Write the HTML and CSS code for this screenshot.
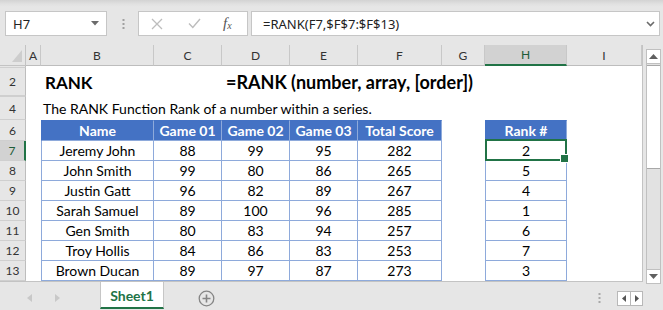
FILE: index.html
```html
<!DOCTYPE html>
<html>
<head>
<meta charset="utf-8">
<link rel="stylesheet" href="styles.css">
</head>
<body>
<div class="topbar">
  <div class="namebox"><span>H7</span><svg class="nb-arrow" width="8" height="5" viewBox="0 0 8 5"><polygon points="0,0 8,0 4,4.5" fill="#6b6b6b"/></svg></div>
  <svg class="vdots" width="3" height="11" viewBox="0 0 3 11"><rect x="0.5" y="0" width="2" height="2" fill="#a0a0a0"/><rect x="0.5" y="4" width="2" height="2" fill="#a0a0a0"/><rect x="0.5" y="8" width="2" height="2" fill="#a0a0a0"/></svg>
  <div class="fxbox">
    <svg class="ic-x" width="12" height="12" viewBox="0 0 12 12"><path d="M1 1 L11 11 M11 1 L1 11" stroke="#bdbdbd" stroke-width="1.3" fill="none"/></svg>
    <svg class="ic-check" width="13" height="11" viewBox="0 0 13 11"><path d="M1 5.5 L4.8 9.5 L12 1" stroke="#bdbdbd" stroke-width="1.4" fill="none"/></svg>
    <span class="fx">f<sub>x</sub></span>
  </div>
  <div class="formula"><span>=RANK(F7,$F$7:$F$13)</span><svg width="9" height="6" viewBox="0 0 9 6"><path d="M1 1 L4.5 4.5 L8 1" stroke="#6b6b6b" stroke-width="1.6" fill="none"/></svg></div>
</div>
<div class="main">
  <div class="leftpane">
    <div class="sheet">
      <div class="corner"><svg width="10" height="12" viewBox="0 0 10 12"><polygon points="10,0 10,12 0,12" fill="#cdcdcd"/></svg></div>
      <div class="ch">A</div><div class="ch">B</div><div class="ch">C</div><div class="ch">D</div><div class="ch">E</div><div class="ch">F</div><div class="ch">G</div><div class="ch sel">H</div><div class="ch">I</div>

      <div class="rh"></div><div class="fill"></div>

      <div class="rh">2</div><div class="c"></div><div class="c title">RANK</div><div class="c"></div><div class="c title syntax">=RANK (number, array, [order])</div>

      <div class="rh"></div><div class="fill"></div>

      <div class="rh">4</div><div class="c"></div><div class="c desc">The RANK Function Rank of a number within a series.</div>

      <div class="rh">6</div><div class="c"></div><div class="th l">Name</div><div class="th">Game 01</div><div class="th">Game 02</div><div class="th">Game 03</div><div class="th">Total Score</div><div class="c"></div><div class="th l">Rank #</div><div class="c"></div>

      <div class="rh sel">7</div><div class="c"></div><div class="t l">Jeremy John</div><div class="t">88</div><div class="t">99</div><div class="t">95</div><div class="t">282</div><div class="c"></div><div class="t l active">2</div><div class="c"></div>
      <div class="rh">8</div><div class="c"></div><div class="t l">John Smith</div><div class="t">99</div><div class="t">80</div><div class="t">86</div><div class="t">265</div><div class="c"></div><div class="t l">5</div><div class="c"></div>
      <div class="rh">9</div><div class="c"></div><div class="t l">Justin Gatt</div><div class="t">96</div><div class="t">82</div><div class="t">89</div><div class="t">267</div><div class="c"></div><div class="t l">4</div><div class="c"></div>
      <div class="rh">10</div><div class="c"></div><div class="t l">Sarah Samuel</div><div class="t">89</div><div class="t">100</div><div class="t">96</div><div class="t">285</div><div class="c"></div><div class="t l">1</div><div class="c"></div>
      <div class="rh">11</div><div class="c"></div><div class="t l">Gen Smith</div><div class="t">80</div><div class="t">83</div><div class="t">94</div><div class="t">257</div><div class="c"></div><div class="t l">6</div><div class="c"></div>
      <div class="rh">12</div><div class="c"></div><div class="t l">Troy Hollis</div><div class="t">84</div><div class="t">86</div><div class="t">83</div><div class="t">253</div><div class="c"></div><div class="t l">7</div><div class="c"></div>
      <div class="rh">13</div><div class="c"></div><div class="t l">Brown Ducan</div><div class="t">89</div><div class="t">97</div><div class="t">87</div><div class="t">273</div><div class="c"></div><div class="t l">3</div><div class="c"></div>
    </div>
    <div class="tabbar">
      <div class="navs">
        <svg width="5" height="8" viewBox="0 0 5 8"><polygon points="5,0 5,8 0,4" fill="#c8c8c8"/></svg>
        <svg width="5" height="8" viewBox="0 0 5 8"><polygon points="0,0 0,8 5,4" fill="#c8c8c8"/></svg>
      </div>
      <div class="tab">Sheet1</div>
      <svg class="plus" width="17" height="17" viewBox="0 0 17 17"><circle cx="8.5" cy="8.5" r="7.3" stroke="#858585" stroke-width="1.3" fill="none"/><path d="M8.5 4.5 V12.5 M4.5 8.5 H12.5" stroke="#858585" stroke-width="1.6"/></svg>
      <svg class="hdots" width="3" height="11" viewBox="0 0 3 11"><rect x="0.5" y="0" width="2" height="2" fill="#a8a8a8"/><rect x="0.5" y="4" width="2" height="2" fill="#a8a8a8"/><rect x="0.5" y="8" width="2" height="2" fill="#a8a8a8"/></svg>
      <div class="harrows">
        <div class="hbtn"><svg width="4" height="7" viewBox="0 0 4 7"><polygon points="4,0 4,7 0,3.5" fill="#555"/></svg></div>
        <div class="hbtn"><svg width="4" height="7" viewBox="0 0 4 7"><polygon points="0,0 0,7 4,3.5" fill="#555"/></svg></div>
      </div>
    </div>
  </div>
  <div class="vpane">
    <div class="vscroll">
      <div class="vbtn"><svg width="9" height="5" viewBox="0 0 9 5"><polygon points="0,5 9,5 4.5,0" fill="#606060"/></svg></div>
      <div class="thumb"></div>
      <div class="track"></div>
      <div class="vbtn down"><svg width="9" height="5" viewBox="0 0 9 5"><polygon points="0,0 9,0 4.5,5" fill="#606060"/></svg></div>
    </div>
  </div>
</div>
</body>
</html>
```

FILE: styles.css
```css
* { box-sizing: border-box; margin: 0; padding: 0; }

body {
  width: 663px;
  height: 310px;
  overflow: hidden;
  background: #e6e6e6;
  font-family: Lato, "Liberation Sans", sans-serif;
  color: #000;
}

/* ---------- formula bar ---------- */
.topbar {
  height: 45px;
  display: flex;
  align-items: flex-start;
  padding: 11px 0 0 5px;
  background: linear-gradient(#d3d3d3 0, #e1e1e1 4px, #e6e6e6 7px);
}

.namebox {
  width: 102px;
  height: 25px;
  background: #fff;
  border: 1px solid #c6c6c6;
  display: flex;
  align-items: center;
  justify-content: space-between;
  padding: 0 7px 0 7px;
  font-family: "Noto Sans", sans-serif;
  font-size: 13px;
  color: #222;
}

.vdots { margin: 8px 0 0 15px; }

.fxbox {
  margin-left: 13px;
  width: 110px;
  height: 25px;
  background: #fff;
  border: 1px solid #c6c6c6;
  display: flex;
  align-items: center;
}

.ic-x { margin-left: 12px; }
.ic-check { margin-left: 25px; }

.fx {
  margin-left: 22px;
  font-family: "Liberation Serif", serif;
  font-style: italic;
  font-size: 15px;
  color: #555;
  line-height: 1;
}
.fx sub { font-size: 10px; vertical-align: -1px; }

.formula {
  margin-left: 3px;
  width: 409px;
  height: 25px;
  background: #fff;
  border: 1px solid #c6c6c6;
  display: flex;
  align-items: center;
  justify-content: space-between;
  padding: 0 4px 0 11px;
  font-family: "Noto Sans", sans-serif;
  font-size: 13px;
  color: #222;
}

/* ---------- main area ---------- */
.main {
  display: flex;
  height: 265px;
}

.leftpane {
  width: 643px;
  display: flex;
  flex-direction: column;
}

.sheet {
  display: grid;
  grid-template-columns: 26px 15px 113px 68px 68px 68px 84px 43px 82px 75px;
  grid-template-rows: 21px 2px 28px 1px 23px 21px repeat(7, 20px);
  background: #fff;
  border-right: 1px solid #c3c3c3;
}

.corner {
  background: #e6e6e6;
  border-right: 1px solid #c3c3c3;
  border-bottom: 1px solid #c3c3c3;
  display: flex;
  align-items: flex-end;
  justify-content: flex-end;
  padding: 0 3px 3px 0;
}

.ch {
  background: #e6e6e6;
  border-right: 1px solid #c8c8c8;
  border-bottom: 1px solid #bdbdbd;
  display: flex;
  align-items: center;
  justify-content: center;
  font-size: 12px;
  color: #333;
}
.ch.sel {
  background: #d2d2d2;
  border-bottom: 2px solid #217346;
  color: #1d5c38;
}

.rh {
  background: #e6e6e6;
  border-right: 1px solid #bdbdbd;
  border-bottom: 1px solid #cfcfcf;
  display: flex;
  align-items: center;
  justify-content: center;
  font-size: 12px;
  color: #333;
}
.rh.sel {
  background: #d2d2d2;
  border-right: 2px solid #217346;
  color: #1d5c38;
}

.fill { grid-column: 2 / -1; }

.c {
  display: flex;
  align-items: center;
  white-space: nowrap;
}

.title {
  font-weight: 700;
  font-size: 17px;
  padding-left: 4px;
}
.syntax {
  grid-column: 5 / -1;
  font-size: 18px;
}

.desc {
  grid-column: 3 / -1;
  font-size: 14px;
  padding-left: 2px;
}

.th, .t {
  display: flex;
  align-items: center;
  justify-content: center;
  font-size: 14px;
  white-space: nowrap;
  border-right: 1px solid #8eaadb;
  border-bottom: 1px solid #8eaadb;
}
.th {
  background: #4472c4;
  color: #fff;
  font-weight: 700;
  border-top: 1px solid #4472c4;
}
.l { border-left: 1px solid #8eaadb; }
.th.l { border-left-color: #4472c4; }

.active { position: relative; }
.active::after {
  content: "";
  position: absolute;
  left: -1px;
  right: -1px;
  top: -2px;
  bottom: -1px;
  border: 2px solid #217346;
}
.active::before {
  content: "";
  position: absolute;
  right: -3px;
  bottom: -3px;
  width: 7px;
  height: 7px;
  background: #217346;
  border: 1px solid #fff;
  z-index: 2;
}

/* ---------- sheet tabs ---------- */
.tabbar {
  height: 29px;
  display: flex;
  align-items: flex-start;
  border-top: 1px solid #c3c3c3;
}

.navs {
  width: 100px;
  display: flex;
  gap: 23px;
  padding: 12px 0 0 27px;
}

.tab {
  width: 64px;
  height: 27px;
  background: #fff;
  border-left: 1px solid #c6c6c6;
  border-right: 1px solid #c6c6c6;
  border-bottom: 2px solid #217346;
  display: flex;
  align-items: center;
  justify-content: center;
  font-weight: 700;
  font-size: 14px;
  color: #217346;
  padding-top: 1px;
}

.plus { margin: 8px 0 0 34px; }

.hdots { margin: 11px 0 0 auto; }

.harrows {
  margin: 9px 0 0 16px;
  display: flex;
  border: 1px solid #b8b8b8;
  background: #fff;
  height: 15px;
}
.hbtn {
  width: 12px;
  display: flex;
  align-items: center;
  justify-content: center;
}
.hbtn + .hbtn { border-left: 1px solid #b8b8b8; }

/* ---------- vertical scrollbar ---------- */
.vpane {
  width: 20px;
  padding: 4px 2px 0 3px;
}

.vscroll {
  height: 235px;
  border: 1px solid #c0c0c0;
  display: flex;
  flex-direction: column;
  background: #e2e2e2;
}
.vbtn {
  height: 14px;
  background: #fff;
  display: flex;
  align-items: center;
  justify-content: center;
  border-bottom: 1px solid #c0c0c0;
}
.vbtn.down {
  border-bottom: none;
  border-top: 1px solid #c0c0c0;
}
.thumb {
  height: 104px;
  background: #fff;
  border-top: 1px solid #a8a8a8;
  border-bottom: 1px solid #a8a8a8;
  margin-top: 1px;
}
.track { flex: 1; }
```
